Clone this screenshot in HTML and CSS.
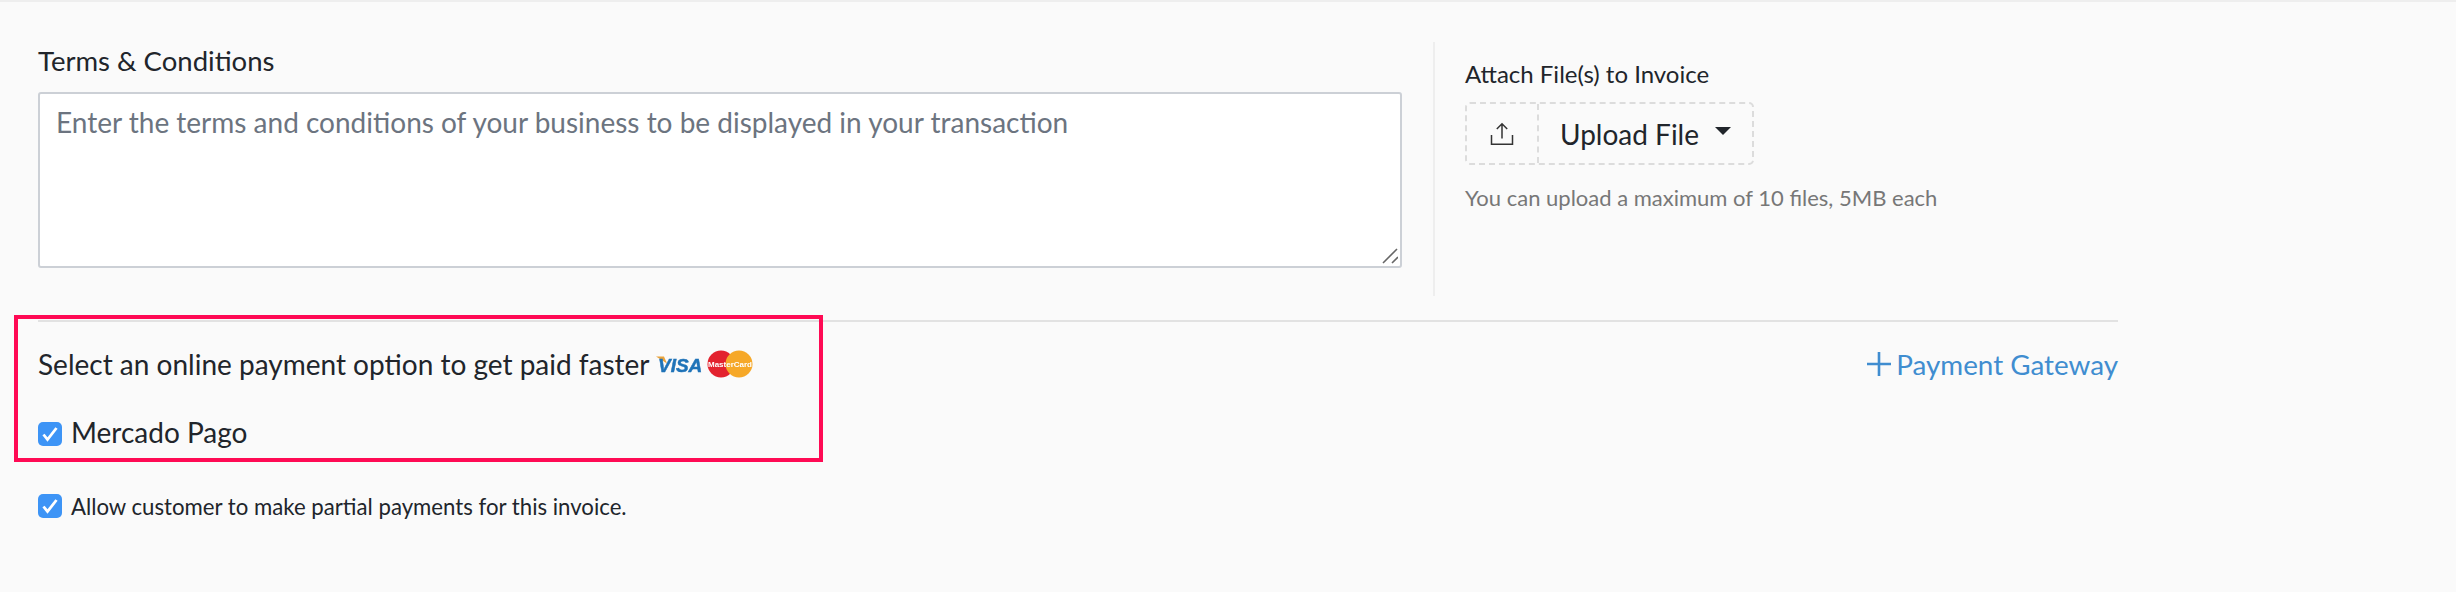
FILE: index.html
```html
<!DOCTYPE html>
<html lang="en">
<head>
<meta charset="utf-8">
<title>Invoice</title>
<link rel="stylesheet" href="styles.css">
</head>
<body>
<main class="page">
  <section class="top">
    <div class="terms">
      <label class="terms-label" for="terms">Terms &amp; Conditions</label>
      <div class="terms-field">
        <textarea id="terms" class="terms-input" placeholder="Enter the terms and conditions of your business to be displayed in your transaction"></textarea>
        <svg class="grip" width="16" height="16" viewBox="0 0 16 16" fill="none" stroke="#666" stroke-width="1.6"><path d="M1 15 15 1M10 15l6-6"/></svg>
      </div>
    </div>
    <div class="attach">
      <div class="attach-label">Attach File(s) to Invoice</div>
      <div class="upload">
        <span class="upload-icon">
          <svg width="24" height="24" viewBox="0 0 24 24" fill="none" stroke="#333" stroke-width="1.5"><path d="M12 16.5V2M6.8 7 12 1.8 17.2 7M1.5 13v9.2h21V13"/></svg>
        </span>
        <span class="upload-btn">Upload File<span class="caret"></span></span>
      </div>
      <div class="attach-help">You can upload a maximum of 10 files, 5MB each</div>
    </div>
  </section>
  <section class="pay">
    <div class="pay-row">
      <div class="pay-title">
        <span>Select an online payment option to get paid faster</span>
        <svg class="visa" width="48" height="26" viewBox="0 0 48 26"><path d="M0 5.5h8l3 7z" fill="#e9a33c"/><text x="2" y="20.5" class="visa-text">VISA</text></svg>
        <svg class="mc" width="46" height="28" viewBox="0 0 46 28"><circle cx="14" cy="14" r="13.5" fill="#e3222e"/><circle cx="32" cy="14" r="13.5" fill="#f6a828"/><text x="23" y="17" class="mc-text">MasterCard</text></svg>
      </div>
      <a class="gateway" href="#"><svg width="24" height="24" viewBox="0 0 24 24" stroke="#408dd0" stroke-width="2.6"><path d="M12 0v24M0 12h24"/></svg>Payment Gateway</a>
    </div>
    <label class="check check-lg"><span class="box"><svg width="24" height="24" viewBox="0 0 24 24" fill="none" stroke="#fff" stroke-width="2.8"><path d="M5.5 12.5l4 5 9-11.5"/></svg></span>Mercado Pago</label>
    <label class="check check-sm"><span class="box"><svg width="24" height="24" viewBox="0 0 24 24" fill="none" stroke="#fff" stroke-width="2.8"><path d="M5.5 12.5l4 5 9-11.5"/></svg></span>Allow customer to make partial payments for this invoice.</label>
    <div class="highlight"></div>
  </section>
</main>
</body>
</html>
```
FILE: styles.css
```css
* { box-sizing: border-box; }
html, body { margin: 0; height: 100%; }
body {
  background: #fafafa;
  font-family: Lato, "Open Sans", sans-serif;
  color: #21252b;
  overflow: hidden;
  border-top: 2px solid #eeeeee;
}
.page { width: 2080px; margin-left: 38px; position: relative; }
.top { display: flex; height: 278px; padding-top: 40px; }
.terms { width: 1364px; display: flex; flex-direction: column; }
.terms-label { font-size: 27.5px; line-height: 38px; margin-bottom: 12px; }
.terms-field { position: relative; height: 176px; }
.terms-input {
  display: block; width: 1364px; height: 176px;
  border: 2px solid #ccd0d6; border-radius: 3px; background: #fff;
  padding: 12px 16px; font: 28px/32px Lato, sans-serif; outline: none; resize: none;
}
.terms-input::placeholder { color: #6c7480; opacity: 1; }
.grip { position: absolute; right: 4px; bottom: 4px; }
.attach { margin-left: 31px; border-left: 2px solid #eeeeee; padding-left: 30px; height: 254px; flex: 1; }
.attach-label { font-size: 24px; line-height: 26px; margin: 19px 0 15px; }
.upload { display: inline-flex; height: 63px; width: 289px; border: 2px dashed #dcdcdc; border-radius: 5px; align-items: stretch; }
.upload-icon { width: 72px; border-right: 2px dashed #dcdcdc; display: flex; align-items: center; justify-content: center; }
.upload-btn { flex: 1; display: flex; align-items: center; padding-left: 21px; font-size: 28px; }
.caret { width: 0; height: 0; margin-left: 16px; margin-top: -6px; border-left: 8px solid transparent; border-right: 8px solid transparent; border-top: 8px solid #21252b; }
.attach-help { font-size: 22px; line-height: 24px; color: #777; margin-top: 21px; }
.pay { border-top: 2px solid #e2e2e2; position: relative; margin-top: 40px; padding-top: 22px; }
.pay-row { display: flex; justify-content: space-between; align-items: center; height: 40px; margin-bottom: 36px; }
.pay-title { display: flex; align-items: center; font-size: 28px; }
.visa { margin-left: 6px; filter: blur(.6px); }
.mc { margin-left: 3px; filter: blur(.5px); }
.visa-text { font: italic 700 19px "Liberation Sans", sans-serif; fill: #1f73b8; stroke: #1f73b8; stroke-width: .5px; }
.mc-text { font: 700 8px "Liberation Sans", sans-serif; fill: #fff; text-anchor: middle; }
.gateway { display: flex; align-items: center; gap: 5px; color: #408dd0; font-size: 27.8px; text-decoration: none; }
.check { display: flex; align-items: center; gap: 9px; }
.check-lg { font-size: 28px; height: 24px; margin-bottom: 50px; }
.check-lg .box { margin-top: 4px; }
.check-sm { font-size: 22.2px; height: 24px; }
.box { width: 24px; height: 24px; border-radius: 5px; background: #3d94f6; display: block; }
.box svg { display: block; }
.highlight { position: absolute; left: -24px; top: -7px; width: 809px; height: 147px; border: 4px solid #ff0a54; pointer-events: none; }
```
